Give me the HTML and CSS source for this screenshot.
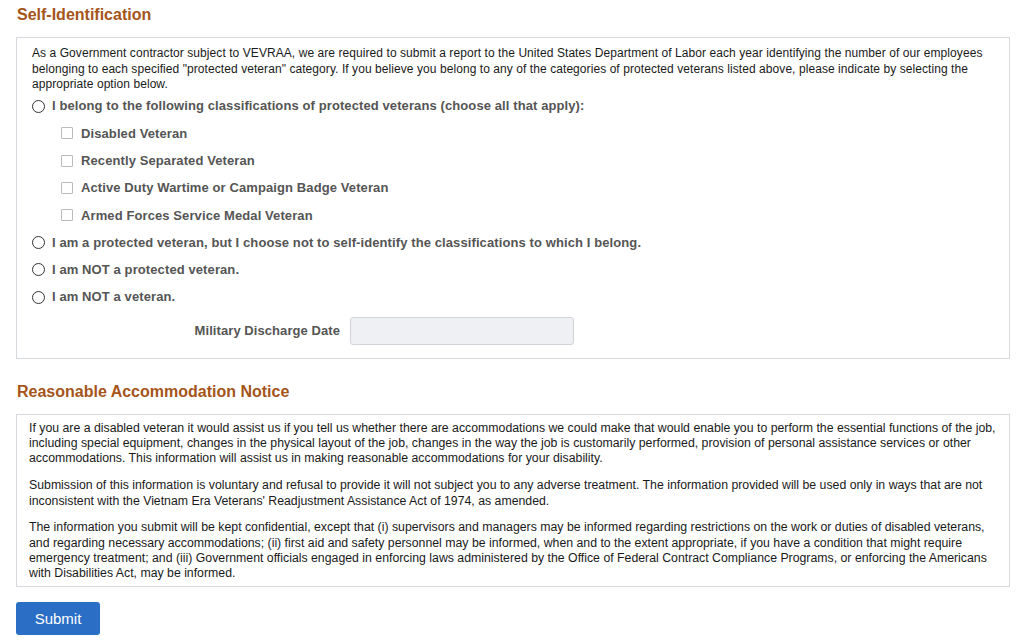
FILE: index.html
```html
<!DOCTYPE html>
<html lang="en">
<head>
  <meta charset="UTF-8">
  <title>Self-Identification</title>
  <link rel="stylesheet" href="styles.css">
</head>
<body>

<div class="page">
  <h2 class="section-title">Self-Identification</h2>
  <div class="panel panel-form">
    <p class="intro">As a Government contractor subject to VEVRAA, we are required to submit a report to the United States Department of Labor each year identifying the number of our employees belonging to each specified "protected veteran" category. If you believe you belong to any of the categories of protected veterans listed above, please indicate by selecting the appropriate option below.</p>

    <label class="option"><span class="radio"></span>I belong to the following classifications of protected veterans (choose all that apply):</label>
    <label class="option sub"><span class="check"></span>Disabled Veteran</label>
    <label class="option sub"><span class="check"></span>Recently Separated Veteran</label>
    <label class="option sub"><span class="check"></span>Active Duty Wartime or Campaign Badge Veteran</label>
    <label class="option sub"><span class="check"></span>Armed Forces Service Medal Veteran</label>
    <label class="option"><span class="radio"></span>I am a protected veteran, but I choose not to self-identify the classifications to which I belong.</label>
    <label class="option"><span class="radio"></span>I am NOT a protected veteran.</label>
    <label class="option"><span class="radio"></span>I am NOT a veteran.</label>

    <div class="field">
      <label class="field-label">Military Discharge Date</label>
      <div class="field-input"></div>
    </div>
  </div>

  <h2 class="section-title">Reasonable Accommodation Notice</h2>
  <div class="panel panel-notice">
    <p>If you are a disabled veteran it would assist us if you tell us whether there are accommodations we could make that would enable you to perform the essential functions of the job, including special equipment, changes in the physical layout of the job, changes in the way the job is customarily performed, provision of personal assistance services or other accommodations. This information will assist us in making reasonable accommodations for your disability.</p>
    <p>Submission of this information is voluntary and refusal to provide it will not subject you to any adverse treatment. The information provided will be used only in ways that are not inconsistent with the Vietnam Era Veterans' Readjustment Assistance Act of 1974, as amended.</p>
    <p>The information you submit will be kept confidential, except that (i) supervisors and managers may be informed regarding restrictions on the work or duties of disabled veterans, and regarding necessary accommodations; (ii) first aid and safety personnel may be informed, when and to the extent appropriate, if you have a condition that might require emergency treatment; and (iii) Government officials engaged in enforcing laws administered by the Office of Federal Contract Compliance Programs, or enforcing the Americans with Disabilities Act, may be informed.</p>
  </div>

  <button class="btn">Submit</button>
</div>

</body>
</html>
```

FILE: styles.css
```css
body {
  margin: 0;
  font-family: Arial, "Liberation Sans", sans-serif;
  background: #fff;
  color: #1a1a1a;
}
.page {
  padding: 5px 21px 0 16px;
}
.section-title {
  margin: 0 0 12px 1px;
  font-size: 16px;
  font-weight: bold;
  color: #a5541a;
  line-height: 20px;
}
.panel {
  border: 1px solid #d5d8dd;
  font-size: 12px;
  line-height: 15.5px;
}
.panel-form {
  padding: 8px 15px 13px 15px;
  margin-bottom: 23px;
  letter-spacing: 0.07px;
}
.intro {
  margin: 0;
}
.option {
  display: flex;
  align-items: center;
  height: 27.3px;
  font-size: 13px;
  font-weight: bold;
  color: #555;
  letter-spacing: 0.1px;
}
.option.sub {
  padding-left: 29px;
}
.radio {
  width: 11px;
  height: 11px;
  border: 1px solid #333;
  border-radius: 50%;
  margin: 0 7px 0 0;
  flex: none;
}
.check {
  width: 10px;
  height: 10px;
  border: 1px solid #bbb;
  border-radius: 1px;
  margin-right: 8px;
  flex: none;
}
.field {
  display: flex;
  align-items: center;
  margin-top: 6px;
}
.field-label {
  width: 308px;
  text-align: right;
  padding-right: 10px;
  font-size: 13px;
  font-weight: bold;
  color: #555;
}
.field-input {
  width: 222px;
  height: 26px;
  background: #eff0f4;
  border: 1px solid #d0d3d8;
  border-radius: 3px;
}
.panel-notice {
  padding: 6px 12px 4px 12px;
  margin-bottom: 15px;
  line-height: 15.3px;
  font-size: 12.3px;
}
.panel-notice p {
  margin: 0 0 11.5px 0;
}
.panel-notice p:last-child {
  margin-bottom: 0;
}
.btn {
  display: block;
  width: 84px;
  height: 33px;
  background: #2a6ec6;
  color: #fff;
  border: none;
  border-radius: 3px;
  font-family: Arial, "Liberation Sans", sans-serif;
  font-size: 15px;
  cursor: pointer;
}
```
